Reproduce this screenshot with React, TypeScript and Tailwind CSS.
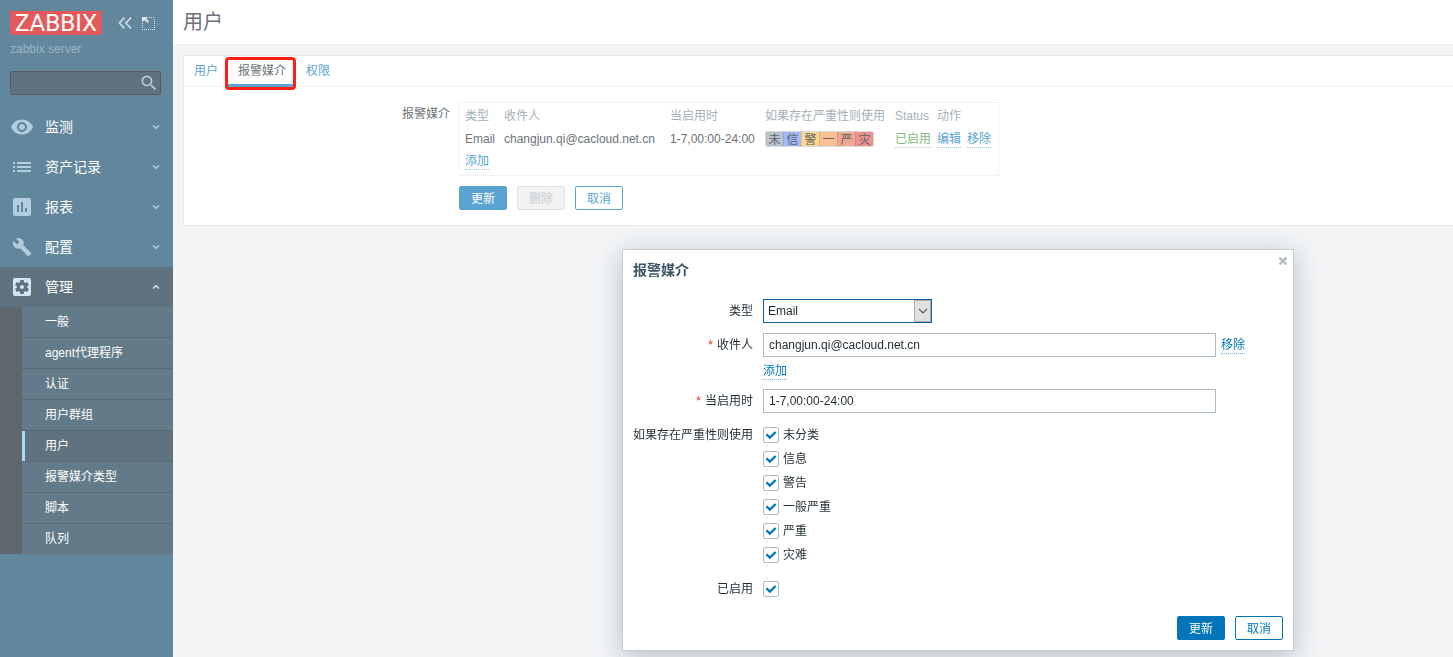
import { clsx } from "clsx";
import { useState } from "react";
import type { ReactNode } from "react";
import type { IconType } from "react-icons";
import {
  MdAssessment,
  MdBuild,
  MdList,
  MdSearch,
  MdSettingsApplications,
  MdVisibility,
} from "react-icons/md";

type NavItem = { label: string; icon: IconType; small?: boolean; open?: boolean };

const NAV: NavItem[] = [
  { label: "监测", icon: MdVisibility },
  { label: "资产记录", icon: MdList },
  { label: "报表", icon: MdAssessment },
  { label: "配置", icon: MdBuild, small: true },
  { label: "管理", icon: MdSettingsApplications, open: true },
];

const SUBNAV = ["一般", "agent代理程序", "认证", "用户群组", "用户", "报警媒介类型", "脚本", "队列"];

const SEVERITIES = [
  { name: "未分类", short: "未", color: "bg-[#b8c4ca]" },
  { name: "信息", short: "信", color: "bg-[#a4b8fb]" },
  { name: "警告", short: "警", color: "bg-[#fdd98f]" },
  { name: "一般严重", short: "一", color: "bg-[#fdc095]" },
  { name: "严重", short: "严", color: "bg-[#f0a791]" },
  { name: "灾难", short: "灾", color: "bg-[#ed9292]" },
];

function Chevron({ up }: { up?: boolean }) {
  return (
    <svg viewBox="0 0 8 6" className="h-1.5 w-2" fill="none" stroke="currentColor" strokeWidth="1.4">
      <path d={up ? "M1 4.5 4 1.7 7 4.5" : "M1 1.5 4 4.3 7 1.5"} />
    </svg>
  );
}

function DottedLink({ children, className }: { children: ReactNode; className: string }) {
  return (
    <a href="#" className={clsx("inline-block border-b border-dotted align-middle leading-4", className)}>
      {children}
    </a>
  );
}

function Checkbox({ id, defaultChecked = true }: { id: string; defaultChecked?: boolean }) {
  return (
    <span className="relative block h-4 w-4 shrink-0">
      <input
        id={id}
        type="checkbox"
        defaultChecked={defaultChecked}
        className="peer block h-4 w-4 appearance-none rounded-xs border border-[#acbbc2] bg-white"
      />
      <svg
        viewBox="0 0 16 16"
        className="pointer-events-none absolute inset-0 hidden h-4 w-4 peer-checked:block"
        fill="none"
        stroke="#0275b8"
        strokeWidth="2.2"
      >
        <path d="M3.400 7.300 6.900 10.600 12.600 5" />
      </svg>
    </span>
  );
}

function Sidebar() {
  return (
    <aside className="w-[173px] shrink-0 bg-[#62879d] text-white">
      <div className="flex items-center px-2.5 pt-[11px]">
        <a
          href="#"
          className="flex h-6 w-[92px] items-center justify-center bg-[#e45959] font-[Roboto,sans-serif] text-[24px] leading-6"
        >
          ZABBIX
        </a>
        <button type="button" aria-label="折叠" className="ml-4 text-[#c5d8e3]">
          <svg viewBox="0 0 14 12" className="h-3 w-3.5" fill="none" stroke="currentColor" strokeWidth="1.8">
            <path d="M6.500.6 1.400 6l5.100 5.400M13 .6 7.900 6l5.100 5.400" />
          </svg>
        </button>
        <button type="button" aria-label="隐藏" className="ml-2.5 text-[#dbe7ee]">
          <svg viewBox="0 0 13 13" className="h-[13px] w-[13px]" fill="currentColor">
            <path d="M0 0h6L4.300 1.700 7 4.400 5.400 6 2.700 3.300 0 5z" />
            <path
              d="M7 .5h6M12.500 2v11M0 12.500h12M.5 6v6"
              fill="none"
              stroke="currentColor"
              strokeDasharray="1 1"
            />
          </svg>
        </button>
      </div>
      <p className="px-2.5 pt-1.5 leading-4 text-[#9db6c5]">zabbix server</p>
      <form className="relative mx-2.5 mt-3.5 mr-3">
        <input
          type="text"
          aria-label="搜索"
          className="block h-6 w-full rounded-xs border border-[#545f67] bg-[#60727e] pr-7 pl-1.5"
        />
        <MdSearch className="absolute top-0.5 right-0.5 h-5 w-5 text-[#b5cddb]" />
      </form>

      <nav className="mt-3">
        {NAV.map(({ label, icon: Icon, small, open }) => (
          <button
            key={label}
            type="button"
            aria-expanded={!!open}
            className={clsx("flex h-10 w-full items-center pr-[13px] pl-2.5 text-sm", open && "bg-[#60727e]")}
          >
            <span
              className={clsx(
                "flex h-6 w-6 items-center justify-center",
                open ? "text-[#d3e6f1]" : "text-[#b2cddd]",
              )}
            >
              <Icon className={small ? "h-5 w-5" : "h-6 w-6"} />
            </span>
            <span className="ml-[11px] flex-1 text-left">{label}</span>
            <span className={open ? "text-[#d3e6f1]" : "text-[#b2cddd]"}>
              <Chevron up={open} />
            </span>
          </button>
        ))}
        <ul className="divide-y divide-[#596973] border-l-[22px] border-[#5d676d] bg-[#637b89]">
          {SUBNAV.map((label) => (
            <li key={label}>
              <a
                href="#"
                className={clsx(
                  "block h-[30px] border-l-3 pl-5 leading-[30px]",
                  label === "用户" ? "border-[#a8dcff] bg-[#60727e]" : "border-transparent",
                )}
              >
                {label}
              </a>
            </li>
          ))}
        </ul>
      </nav>
    </aside>
  );
}

const TABS = ["用户", "报警媒介", "权限"];

function Tabs() {
  const [active, setActive] = useState("报警媒介");
  return (
    <div role="tablist" className="flex h-[31px] border-b border-[#eef1f3]">
      {TABS.map((tab) => (
        <button
          key={tab}
          type="button"
          role="tab"
          aria-selected={tab === active}
          onClick={() => setActive(tab)}
          className={clsx(
            "relative -mb-px border-b-3 px-2.5 pt-0.5",
            tab === active ? "border-[#5ba4d1] text-[#6c7378]" : "border-transparent text-[#5ba4d1]",
          )}
        >
          {tab}
          {tab === "报警媒介" && (
            <span className="pointer-events-none absolute top-px right-0 -bottom-1.5 -left-[3px] rounded-sm border-3 border-[#ff1e12]" />
          )}
        </button>
      ))}
    </div>
  );
}

function MediaTable() {
  return (
    <div className="w-[540px] border border-[#f0f2f4] px-[5px] pb-1">
      <table className="w-full table-fixed text-left whitespace-nowrap">
        <colgroup>
          <col className="w-[39px]" />
          <col className="w-[166px]" />
          <col className="w-[95px]" />
          <col className="w-[130px]" />
          <col className="w-[42px]" />
          <col />
        </colgroup>
        <thead>
          <tr className="h-6 text-[#a5b0b7]">
            {["类型", "收件人", "当启用时", "如果存在严重性则使用", "Status", "动作"].map((h) => (
              <th key={h} className="pt-0.5 font-normal">
                {h}
              </th>
            ))}
          </tr>
        </thead>
        <tbody>
          <tr className="h-6">
            <td>Email</td>
            <td>changjun.qi@cacloud.net.cn</td>
            <td>1-7,00:00-24:00</td>
            <td>
              <div className="flex w-[109px] overflow-hidden rounded-xs border border-black/15">
                {SEVERITIES.map((s) => (
                  <span
                    key={s.name}
                    title={s.name}
                    className={clsx(
                      "h-3.5 flex-1 border-l border-black/10 text-center leading-4 text-[#5d6367] first:border-l-0",
                      s.color,
                    )}
                  >
                    {s.short}
                  </span>
                ))}
              </div>
            </td>
            <td>
              <DottedLink className="border-[#b0d7b1] text-[#7dbb7f]">已启用</DottedLink>
            </td>
            <td>
              <div className="flex gap-1.5">
                <DottedLink className="border-[#9fcae4] text-[#5ba4d1]">编辑</DottedLink>
                <DottedLink className="border-[#9fcae4] text-[#5ba4d1]">移除</DottedLink>
              </div>
            </td>
          </tr>
          <tr className="h-5">
            <td colSpan={6}>
              <DottedLink className="border-[#9fcae4] text-[#5ba4d1]">添加</DottedLink>
            </td>
          </tr>
        </tbody>
      </table>
    </div>
  );
}

function FormRow({
  label,
  htmlFor,
  required,
  children,
}: {
  label: string;
  htmlFor?: string;
  required?: boolean;
  children: ReactNode;
}) {
  return (
    <div className="flex gap-2.5">
      <label htmlFor={htmlFor} className="w-[120px] shrink-0 text-right leading-6 whitespace-nowrap">
        {required && <span className="mr-1 text-[#e33734]">*</span>}
        {label}
      </label>
      <div className="flex-1">{children}</div>
    </div>
  );
}

const INPUT = "block h-6 w-[453px] border border-[#acbbc2] bg-white px-[5px]";
const BUTTON = "h-6 w-12 rounded-xs border pt-px";

function MediaDialog() {
  return (
    <div
      role="dialog"
      aria-labelledby="dialog-title"
      className="fixed top-[249px] left-[622px] w-[672px] border border-[#c4ced3] bg-white px-2.5 pb-2.5 text-[#1f2c33] shadow-[0_6px_24px_rgba(50,75,90,0.3)]"
    >
      <div className="flex h-[49px] justify-between">
        <h2 id="dialog-title" className="pt-2 text-sm leading-6 font-bold text-[#3c5563]">
          报警媒介
        </h2>
        <button type="button" aria-label="关闭" className="-mr-1 h-[22px] text-[#b5c0c6]">
          <svg viewBox="0 0 8 8" className="h-2 w-2" fill="none" stroke="currentColor" strokeWidth="2.4">
            <path d="M.5.5 7.500 7.500M7.500.5.5 7.500" />
          </svg>
        </button>
      </div>

      <form className="flex flex-col gap-2.5">
        <FormRow label="类型" htmlFor="type">
          <div className="relative w-[169px]">
            <select
              id="type"
              defaultValue="Email"
              className="block h-6 w-full appearance-none border border-[#0a6299] bg-white pl-1"
            >
              <option>Email</option>
              <option>SMS</option>
            </select>
            <span className="pointer-events-none absolute inset-y-px right-px flex w-[17px] items-center justify-center border border-[#adadad] bg-[#e1e1e1] text-[#50575b]">
              <svg viewBox="0 0 10 6" className="h-1.5 w-2.5" fill="none" stroke="currentColor" strokeWidth="1.2">
                <path d="M1 .8 5 4.800 9 .8" />
              </svg>
            </span>
          </div>
        </FormRow>
        <FormRow label="收件人" htmlFor="sendto" required>
          <div className="flex items-center gap-[5px]">
            <input id="sendto" type="text" defaultValue="changjun.qi@cacloud.net.cn" className={INPUT} />
            <DottedLink className="border-[#7fb9da] text-[#0275b8]">移除</DottedLink>
          </div>
          <div className="mt-1.5 flex h-4">
            <DottedLink className="h-[17px] border-[#7fb9da] text-[#0275b8]">添加</DottedLink>
          </div>
        </FormRow>
        <FormRow label="当启用时" htmlFor="period" required>
          <input id="period" type="text" defaultValue="1-7,00:00-24:00" className={INPUT} />
        </FormRow>
        <FormRow label="如果存在严重性则使用">
          <ul>
            {SEVERITIES.map((s) => (
              <li key={s.name} className="flex h-6 items-center gap-1">
                <Checkbox id={`severity-${s.name}`} />
                <label htmlFor={`severity-${s.name}`}>{s.name}</label>
              </li>
            ))}
          </ul>
        </FormRow>
        <FormRow label="已启用" htmlFor="enabled">
          <div className="flex h-6 items-center">
            <Checkbox id="enabled" />
          </div>
        </FormRow>
        <div className="mt-[5px] flex justify-end gap-2.5">
          <button type="button" className={clsx(BUTTON, "border-[#0275b8] bg-[#0275b8] text-white")}>
            更新
          </button>
          <button type="button" className={clsx(BUTTON, "border-[#0275b8] bg-white text-[#0275b8]")}>
            取消
          </button>
        </div>
      </form>
    </div>
  );
}

export default function App() {
  return (
    <div className="flex min-h-screen bg-[#f2f4f6] font-['Liberation_Sans','Noto_Sans_CJK_SC',sans-serif] text-xs text-[#6c7378]">
      <Sidebar />
      <main className="min-w-0 flex-1">
        <header className="flex h-[45px] items-center border-b border-[#e9ecef] bg-white px-2.5">
          <h1 className="text-xl text-[#6c7378]">用户</h1>
        </header>
        <section className="mt-2.5 ml-2.5 border-y border-l border-[#e6eaed] bg-white">
          <Tabs />
          <div className="flex gap-[9px] pt-[15px] pb-[15px]">
            <div className="w-[266px] shrink-0 text-right leading-6">报警媒介</div>
            <div>
              <MediaTable />
              <div className="mt-2.5 flex gap-2.5">
                <button type="button" className={clsx(BUTTON, "border-[#5ba4d1] bg-[#5ba4d1] text-white")}>
                  更新
                </button>
                <button
                  type="button"
                  disabled
                  className={clsx(BUTTON, "border-[#dfe3e5] bg-[#f2f2f2] text-[#c8cfd3]")}
                >
                  删除
                </button>
                <button type="button" className={clsx(BUTTON, "border-[#5ba4d1] bg-white text-[#5ba4d1]")}>
                  取消
                </button>
              </div>
            </div>
          </div>
        </section>
      </main>
      <MediaDialog />
    </div>
  );
}
